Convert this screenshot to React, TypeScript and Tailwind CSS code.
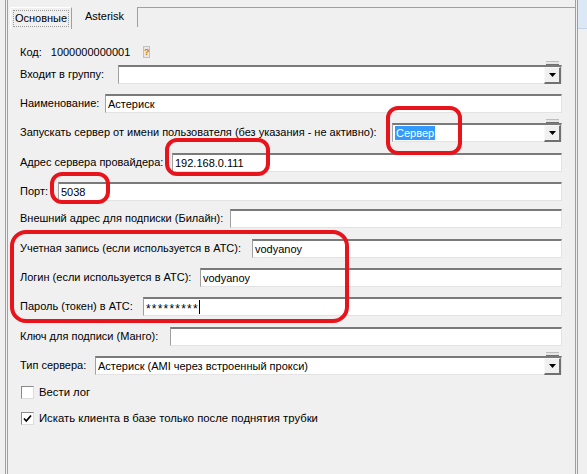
import React from 'react';

const font = "font-['Liberation_Sans','Noto_Sans',sans-serif]";

function DropButton() {
  return (
    <div className="relative h-[17px] w-[17px] shrink-0 bg-[#f0f0f0] border-t border-l border-t-[#f8f8f8] border-l-[#f8f8f8] border-b-2 border-r-2 border-b-[#707070] border-r-[#707070] flex items-center justify-center">
      <svg width="7" height="4" viewBox="0 0 7 4">
        <path d="M0 0H7L3.5 4Z" fill="#000" />
      </svg>
      {/* small stub peeking above the button */}
      <div className="absolute -top-[7px] left-[1px] h-[4px] w-[13px] bg-[#e6e6e6] border-t border-t-[#bdbdbd] border-b border-b-[#707070]" />
    </div>
  );
}

function Field({ value, children, select }: { value?: string; children?: React.ReactNode; select?: boolean }) {
  return (
    <div className="h-[19px] flex-1 min-w-0 bg-white border-t-2 border-l border-t-[#7a7a7a] border-l-[#a0a0a0] border-b border-r border-b-[#e3e3e3] border-r-[#e3e3e3] flex items-center">
      <div className="flex-1 min-w-0 pl-[2px] whitespace-nowrap overflow-hidden leading-none flex items-center">
        {children ?? value}
      </div>
      {select && <DropButton />}
    </div>
  );
}

function Row({ label, w, mt, value, select, children }: { label: string; w: string; mt: string; value?: string; select?: boolean; children?: React.ReactNode }) {
  return (
    <div className={`flex items-center ${mt}`}>
      <div className={`${w} shrink-0 whitespace-nowrap`}>{label}</div>
      <Field value={value} select={select}>{children}</Field>
    </div>
  );
}

function Check({ checked, label, mt }: { checked?: boolean; label: string; mt: string }) {
  return (
    <div className={`flex items-center h-[13px] ${mt}`}>
      <div className="ml-[1px] h-[13px] w-[13px] bg-white border-t border-l border-t-[#8a8a8a] border-l-[#8a8a8a] border-b border-r border-b-[#dcdcdc] border-r-[#dcdcdc] flex items-center justify-center">
        {checked && (
          <svg width="9" height="9" viewBox="0 0 9 9">
            <path d="M1 4.5L3.3 7L8 1.5" stroke="#000" strokeWidth="1.8" fill="none" />
          </svg>
        )}
      </div>
      <span className="ml-[5px] whitespace-nowrap text-[11.3px]">{label}</span>
    </div>
  );
}

function RedMark({ cls }: { cls: string }) {
  return <div className={`absolute border-[4px] border-[#e8141c] rounded-[12px] pointer-events-none ${cls}`} />;
}

export default function App() {
  return (
    <div className={`relative w-[587px] h-[474px] overflow-hidden bg-[#f0f0f0] text-black text-[11px] flex ${font}`}>
      {/* left window edge */}
      <div className="w-[5px] shrink-0" />
      <div className="w-[3px] shrink-0 border-l border-r border-[#a0a0a0]" />

      {/* tab control */}
      <div className="flex-1 flex flex-col min-w-0">
        <div className="flex h-[29px] pl-[2px]">
          <div className="mt-[7px] h-[22px] w-[62px] border-t border-l border-r border-t-white border-l-white border-r-[#a0a0a0] bg-[#f0f0f0] px-[2px] pt-[2px]">
            <div className="h-[17px] border border-dotted border-[#9a9a9a] flex items-center justify-center">Основные</div>
          </div>
          <div className="mt-[7px] h-[20px] w-[66px] border-r border-r-[#a0a0a0] flex items-center justify-center pb-[1px]">Asterisk</div>
          <div className="flex-1 mt-[7px] border-t border-t-[#a0a0a0]" />
        </div>

        <div className="flex flex-col pl-[12px] pr-[13px]">
          <div className="flex items-center h-[16px] mt-[15px]">
            <span>Код:</span>
            <span className="ml-[9px]">1000000000001</span>
            <div className="ml-[13px] h-[12px] w-[7px] bg-[#e8e8e8] border border-[#c0c0c0] text-[9px] leading-none font-bold text-[#d07a00] flex items-center justify-center">?</div>
          </div>
          <Row label="Входит в группу:" w="w-[98px]" mt="mt-[5px]" select />
          <Row label="Наименование:" w="w-[85px]" mt="mt-[10px]" value="Астериск" />
          <Row label="Запускать сервер от имени пользователя (без указания - не активно):" w="w-[372px]" mt="mt-[10px]" select>
            <span className="bg-[#3399ff] text-white px-[1px] h-[14px] flex items-center">Сервер</span>
          </Row>
          <Row label="Адрес сервера провайдера:" w="w-[152px]" mt="mt-[11px]" value="192.168.0.111" />
          <Row label="Порт:" w="w-[38px]" mt="mt-[10px]" value="5038" />
          <Row label="Внешний адрес для подписки (Билайн):" w="w-[210px]" mt="mt-[8px]" />
          <Row label="Учетная запись (если используется в АТС):" w="w-[232px]" mt="mt-[11px]" value="vodyanoy" />
          <Row label="Логин (если используется в АТС):" w="w-[180px]" mt="mt-[10px]" value="vodyanoy" />
          <Row label="Пароль (токен) в АТС:" w="w-[123px]" mt="mt-[10px]">
            <span className="pt-[3px] text-[12px] tracking-[1.2px]">*********</span>
            <span className="w-px h-[14px] bg-black" />
          </Row>
          <Row label="Ключ для подписи (Манго):" w="w-[150px]" mt="mt-[11px]" />
          <Row label="Тип сервера:" w="w-[75px]" mt="mt-[10px]" value="Астериск (AMI через встроенный прокси)" select />
          <Check label="Вести лог" mt="mt-[11px]" />
          <Check checked label="Искать клиента в базе только после поднятия трубки" mt="mt-[13px]" />
        </div>
      </div>

      {/* right window edge */}
      <div className="w-[3px] shrink-0 border-l border-r border-[#a0a0a0]" />
      <div className="w-[9px] shrink-0 flex flex-col">
        <div className="h-[29px] bg-[#dde8f5] border-b border-b-[#c3d3e6]" />
      </div>

      {/* red annotation marks */}
      <RedMark cls="left-[386px] top-[106px] w-[76px] h-[49px]" />
      <RedMark cls="left-[165px] top-[138px] w-[105px] h-[38px]" />
      <RedMark cls="left-[50px] top-[172px] w-[60px] h-[32px]" />
      <RedMark cls="left-[10px] top-[230px] w-[339px] h-[93px] rounded-[16px]" />
    </div>
  );
}
